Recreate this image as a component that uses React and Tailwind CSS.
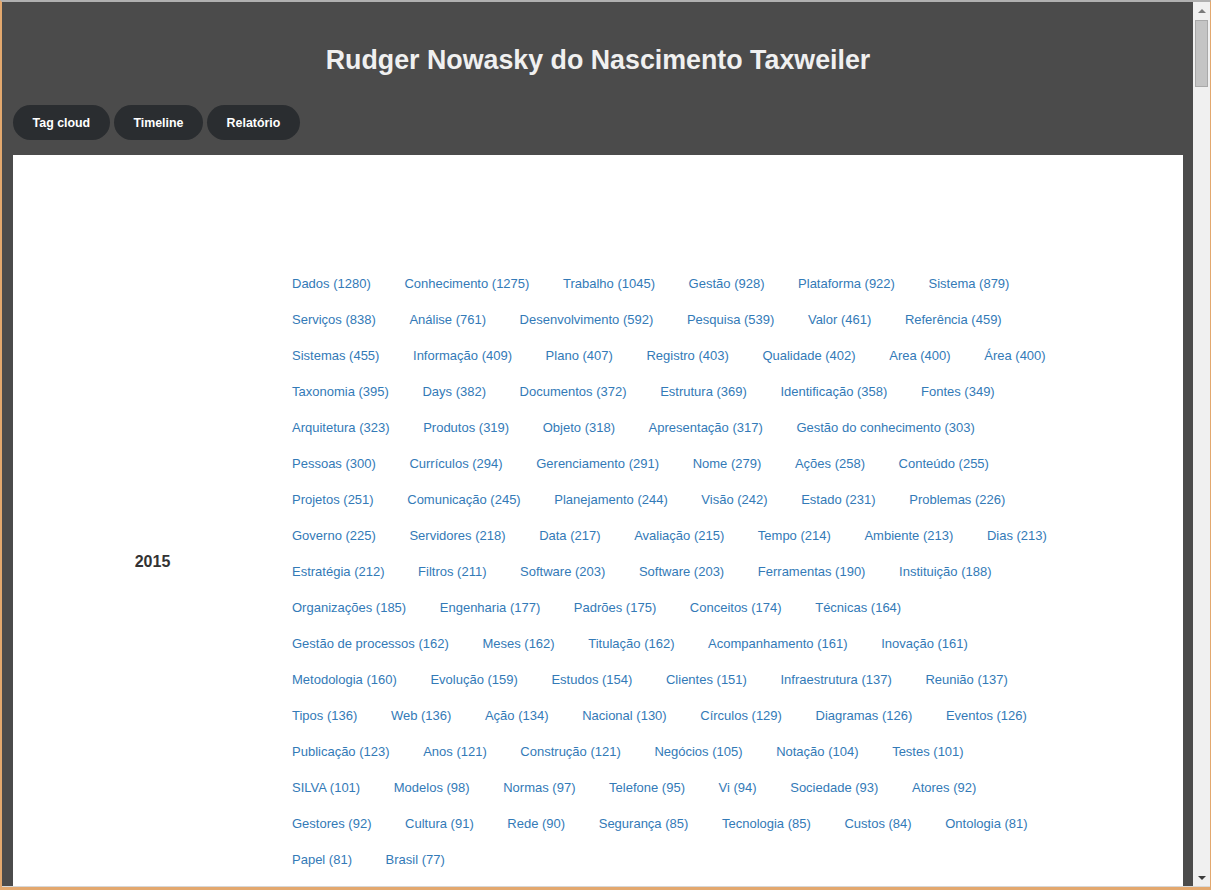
import React from "react";

const rows = [
  ["Dados (1280)", "Conhecimento (1275)", "Trabalho (1045)", "Gestão (928)", "Plataforma (922)", "Sistema (879)"],
  ["Serviços (838)", "Análise (761)", "Desenvolvimento (592)", "Pesquisa (539)", "Valor (461)", "Referência (459)"],
  ["Sistemas (455)", "Informação (409)", "Plano (407)", "Registro (403)", "Qualidade (402)", "Area (400)", "Área (400)"],
  ["Taxonomia (395)", "Days (382)", "Documentos (372)", "Estrutura (369)", "Identificação (358)", "Fontes (349)"],
  ["Arquitetura (323)", "Produtos (319)", "Objeto (318)", "Apresentação (317)", "Gestão do conhecimento (303)"],
  ["Pessoas (300)", "Currículos (294)", "Gerenciamento (291)", "Nome (279)", "Ações (258)", "Conteúdo (255)"],
  ["Projetos (251)", "Comunicação (245)", "Planejamento (244)", "Visão (242)", "Estado (231)", "Problemas (226)"],
  ["Governo (225)", "Servidores (218)", "Data (217)", "Avaliação (215)", "Tempo (214)", "Ambiente (213)", "Dias (213)"],
  ["Estratégia (212)", "Filtros (211)", "Software (203)", "Software (203)", "Ferramentas (190)", "Instituição (188)"],
  ["Organizações (185)", "Engenharia (177)", "Padrões (175)", "Conceitos (174)", "Técnicas (164)"],
  ["Gestão de processos (162)", "Meses (162)", "Titulação (162)", "Acompanhamento (161)", "Inovação (161)"],
  ["Metodologia (160)", "Evolução (159)", "Estudos (154)", "Clientes (151)", "Infraestrutura (137)", "Reunião (137)"],
  ["Tipos (136)", "Web (136)", "Ação (134)", "Nacional (130)", "Círculos (129)", "Diagramas (126)", "Eventos (126)"],
  ["Publicação (123)", "Anos (121)", "Construção (121)", "Negócios (105)", "Notação (104)", "Testes (101)"],
  ["SILVA (101)", "Modelos (98)", "Normas (97)", "Telefone (95)", "Vi (94)", "Sociedade (93)", "Atores (92)"],
  ["Gestores (92)", "Cultura (91)", "Rede (90)", "Segurança (85)", "Tecnologia (85)", "Custos (84)", "Ontologia (81)"],
  ["Papel (81)", "Brasil (77)"],
];

function Btn({ children }) {
  return (
    <button className="h-[35px] rounded-full bg-[#2a2d30] px-[19.6px] pt-px text-[12.4px] font-bold text-white">
      {children}
    </button>
  );
}

export default function App() {
  return (
    <div
      className="flex h-[890px] w-[1211px] flex-col overflow-hidden border-t-2 border-l-2 border-r border-b-[3px] border-t-[#b0b0b0] border-l-[#e3a86e] border-r-[#e3a86e] border-b-[#e3a86e]"
      style={{ fontFamily: '"Liberation Sans", Arial, sans-serif' }}
    >
      <div className="flex min-h-0 flex-1 border-b border-[#d8d8d8]">
        {/* content */}
        <div className="min-w-0 flex-1 overflow-hidden bg-[#4b4b4b] pl-[11px] pr-[10px]">
          <h1 className="pt-[42px] text-center text-[26.8px] font-bold leading-[33px] text-[#f0f0f0]">
            Rudger Nowasky do Nascimento Taxweiler
          </h1>
          <div className="mt-[28px] flex gap-[4px]">
            <Btn>Tag cloud</Btn>
            <Btn>Timeline</Btn>
            <Btn>Relatório</Btn>
          </div>
          <div className="mt-[15px] bg-white pt-[111px] pb-[40px]">
            <div className="flex">
              <div className="flex w-[279px] shrink-0 items-center justify-center pb-[20px]">
                <span className="text-[16px] font-bold text-[#333]">2015</span>
              </div>
              <div className="flex flex-col">
                {rows.map((r, i) => (
                  <div key={i} className="flex h-[36px] items-center gap-x-[33.6px] whitespace-nowrap">
                    {r.map((t, j) => (
                      <a key={j} className="text-[13px] text-[#337ab7]">
                        {t}
                      </a>
                    ))}
                  </div>
                ))}
              </div>
            </div>
          </div>
        </div>
        {/* scrollbar */}
        <div className="flex w-[17px] shrink-0 flex-col items-center bg-[#f0f0f0]">
          <div className="flex h-[17px] w-full items-center justify-center">
            <div className="h-0 w-0 border-x-[4px] border-b-[4px] border-x-transparent border-b-[#7a7a7a]" />
          </div>
          <div className="mt-px h-[67px] w-[13px] border border-[#a9a9a9] bg-[#c4c4c4]" />
          <div className="flex-1" />
          <div className="flex h-[17px] w-full items-center justify-center">
            <div className="h-0 w-0 border-x-[4px] border-t-[4px] border-x-transparent border-t-[#3c3c3c]" />
          </div>
        </div>
      </div>
    </div>
  );
}
